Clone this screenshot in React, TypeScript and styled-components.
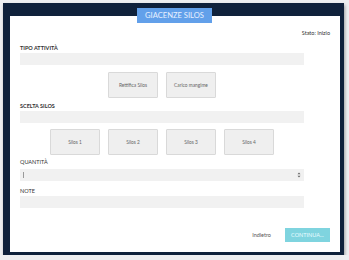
import React from 'react';
import styled, { createGlobalStyle } from 'styled-components';

const GlobalStyle = createGlobalStyle`
  html, body {
    margin: 0;
    padding: 0;
    background: #eeeff1;
    font-family: Lato, "Open Sans", sans-serif;
  }
`;

const Frame = styled.div`
  position: relative;
  margin: 3px 0 0 3px;
  width: 341px;
  height: 252px;
  box-sizing: border-box;
  padding: 13px 4px 3px 7px;
  background: #0f213b;
  box-shadow: 1px 2px 3px rgba(0, 0, 0, 0.35);
`;

const Panel = styled.div`
  height: 100%;
  box-sizing: border-box;
  background: #ffffff;
  padding: 12px 10px 0 10px;
  display: flex;
  flex-direction: column;
`;

const TitleTab = styled.div`
  position: absolute;
  left: 134px;
  top: 5px;
  width: 75px;
  height: 15px;
  background: #62a0ea;
  color: #e9f1ff;
  font-size: 7.6px;
  line-height: 15px;
  text-align: center;
`;

const Status = styled.div`
  text-align: right;
  font-size: 5.5px;
  line-height: 10px;
  color: #333;
`;

const Form = styled.div`
  width: 284px;
  display: flex;
  flex-direction: column;
`;

const Label = styled.div<{ $top: number; $bold?: boolean }>`
  margin-top: ${p => p.$top}px;
  font-size: 5.5px;
  line-height: 8px;
  font-weight: ${p => (p.$bold ? 700 : 400)};
  color: #333;
`;

const Field = styled.div<{ $top: number; $h: number }>`
  margin-top: ${p => p.$top}px;
  height: ${p => p.$h}px;
  background: #f1f1f1;
  display: flex;
  align-items: center;
  justify-content: space-between;
  padding: 0 3px;
  box-sizing: border-box;
`;

const Caret = styled.span`
  width: 1px;
  height: 6px;
  background: #9a9a9a;
`;

const ChoiceRow = styled.div<{ $top: number }>`
  margin-top: ${p => p.$top}px;
  display: flex;
  justify-content: center;
  gap: 8px;
`;

const Choice = styled.button`
  width: 50px;
  height: 26px;
  padding: 0;
  background: #efefef;
  border: 1px solid #d9d9d9;
  border-radius: 1px;
  font-family: inherit;
  font-size: 4.8px;
  color: #666;
`;

const Footer = styled.div`
  margin-top: 20px;
  display: flex;
  justify-content: flex-end;
  align-items: center;
  gap: 14px;
`;

const BackLink = styled.span`
  font-size: 5.5px;
  color: #555;
`;

const Continue = styled.button`
  width: 45px;
  height: 14px;
  padding: 0;
  border: none;
  background: #7fd4df;
  color: #eafcff;
  font-family: inherit;
  font-size: 5.5px;
`;

const Arrows = () => (
  <svg width="4" height="6" viewBox="0 0 4 6">
    <path d="M2 0.5 L3.5 2.3 H0.5 Z M2 5.5 L3.5 3.7 H0.5 Z" fill="#666" />
  </svg>
);

const App: React.FC = () => (
  <>
    <GlobalStyle />
    <Frame>
      <TitleTab>GIACENZE SILOS</TitleTab>
      <Panel>
        <Status>Stato: Inizio</Status>
        <Form>
          <Label $top={6} $bold>TIPO ATTIVITÀ</Label>
          <Field $top={1} $h={12} />
          <ChoiceRow $top={7}>
            <Choice>Rettifica Silos</Choice>
            <Choice>Carico mangime</Choice>
          </ChoiceRow>
          <Label $top={4} $bold>SCELTA SILOS</Label>
          <Field $top={1} $h={12} />
          <ChoiceRow $top={6}>
            <Choice>Silos 1</Choice>
            <Choice>Silos 2</Choice>
            <Choice>Silos 3</Choice>
            <Choice>Silos 4</Choice>
          </ChoiceRow>
          <Label $top={3}>QUANTITÀ</Label>
          <Field $top={3} $h={12}>
            <Caret />
            <Arrows />
          </Field>
          <Label $top={6}>NOTE</Label>
          <Field $top={1} $h={12} />
        </Form>
        <Footer>
          <BackLink>Indietro</BackLink>
          <Continue>CONTINUA...</Continue>
        </Footer>
      </Panel>
    </Frame>
  </>
);

export default App;
